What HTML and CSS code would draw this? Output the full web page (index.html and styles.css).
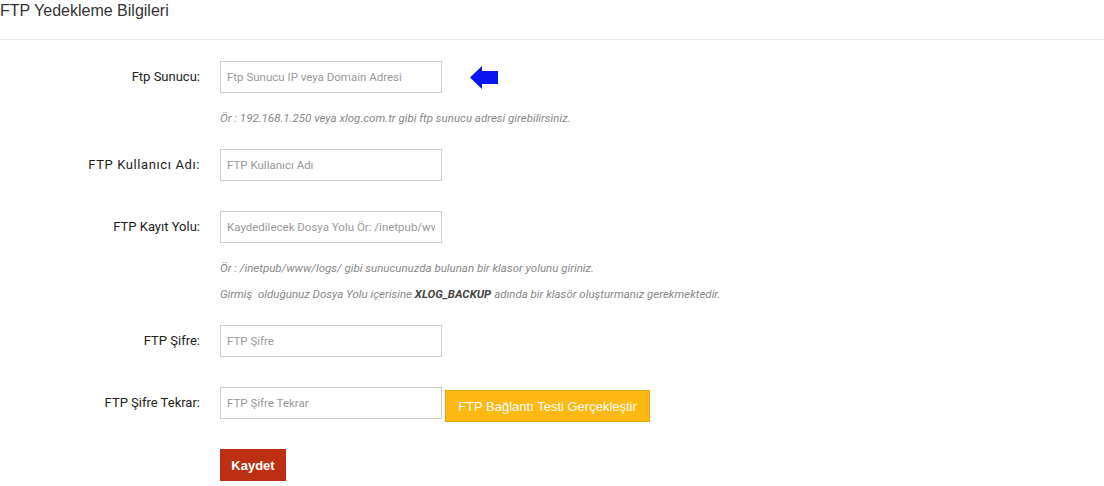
FILE: index.html
```html
<!DOCTYPE html>
<html lang="tr">
<head>
    <meta charset="UTF-8">
    <meta name="viewport" content="width=device-width, initial-scale=1.0">
    <title>FTP Yedekleme Bilgileri</title>
    <link rel="stylesheet" href="styles.css">
</head>
<body>
    <div class="panel">
        <h3 class="panel-title">FTP Yedekleme Bilgileri</h3>

        <form class="ftp-form">
            <div class="group has-help">
                <label for="ftp_sunucu">Ftp Sunucu:</label>
                <div class="field">
                    <div class="field-line">
                        <input type="text" id="ftp_sunucu" placeholder="Ftp Sunucu IP veya Domain Adresi">
                        <svg class="arrow" width="28" height="24" viewBox="0 0 28 24">
                            <path d="M0 11.5 L12 0 L12 5 L28 5 L28 18 L12 18 L12 23 Z" fill="#0a14f0"/>
                        </svg>
                    </div>
                    <div class="help">
                        <p>Ör : 192.168.1.250 veya xlog.com.tr gibi ftp sunucu adresi girebilirsiniz.</p>
                    </div>
                </div>
            </div>

            <div class="group">
                <label for="ftp_kullanici" class="wide">FTP Kullanıcı Adı:</label>
                <div class="field">
                    <input type="text" id="ftp_kullanici" placeholder="FTP Kullanıcı Adı">
                </div>
            </div>

            <div class="group has-help">
                <label for="ftp_yol">FTP Kayıt Yolu:</label>
                <div class="field">
                    <input type="text" id="ftp_yol" placeholder="Kaydedilecek Dosya Yolu Ör: /inetpub/www/logs/">
                    <div class="help">
                        <p>Ör : /inetpub/www/logs/ gibi sunucunuzda bulunan bir klasor yolunu giriniz.</p>
                        <p>Girmiş &nbsp;olduğunuz Dosya Yolu içerisine <b>XLOG_BACKUP</b> adında bir klasör oluşturmanız gerekmektedir.</p>
                    </div>
                </div>
            </div>

            <div class="group">
                <label for="ftp_sifre">FTP Şifre:</label>
                <div class="field">
                    <input type="password" id="ftp_sifre" placeholder="FTP Şifre">
                </div>
            </div>

            <div class="group">
                <label for="ftp_sifre2">FTP Şifre Tekrar:</label>
                <div class="field">
                    <div class="field-line top">
                        <input type="password" id="ftp_sifre2" placeholder="FTP Şifre Tekrar">
                        <button type="button" class="btn btn-test">FTP Bağlantı Testi Gerçekleştir</button>
                    </div>
                </div>
            </div>

            <div class="group">
                <span class="label-space"></span>
                <div class="field">
                    <button type="submit" class="btn btn-save">Kaydet</button>
                </div>
            </div>
        </form>
    </div>
</body>
</html>
```

FILE: styles.css
```css
body {
    font-family: Roboto, "Liberation Sans", Arial, sans-serif;
    margin: 0;
    padding: 0;
    color: #333;
    background: #fff;
}
.panel-title {
    font-family: "Liberation Sans", Arial, sans-serif;
    font-size: 16px;
    font-weight: normal;
    color: #333;
    margin: 0;
    padding: 2px 0 0;
    height: 37px;
    line-height: 18px;
    border-bottom: 1px solid #ebebeb;
}
.ftp-form {
    padding-top: 21px;
}
.group {
    display: flex;
    align-items: flex-start;
    margin-bottom: 30px;
}
.group.has-help {
    margin-bottom: 18px;
}
.group label,
.label-space {
    width: 200px;
    flex-shrink: 0;
    text-align: right;
    font-size: 13px;
    line-height: 32px;
    color: #222;
}
.group label.wide {
    letter-spacing: 0.6px;
}
.field {
    margin-left: 20px;
}
.field-line {
    display: flex;
    align-items: center;
}
/* button sits a little lower than the input but must not push the next row */
.field-line.top {
    align-items: flex-start;
    height: 32px;
}
input[type="text"],
input[type="password"] {
    width: 222px;
    height: 32px;
    padding: 0 6px;
    border: 1px solid #ccc;
    border-radius: 0;
    box-sizing: border-box;
    font-family: Roboto, sans-serif;
    font-size: 11.5px;
    color: #555;
    outline: none;
}
input::placeholder {
    color: #999;
}
.arrow {
    margin-left: 28px;
    margin-top: 1px;
}
.help {
    padding-top: 12px;
}
.help p {
    margin: 0;
    font-size: 11.5px;
    font-style: italic;
    line-height: 26px;
    color: #888;
}
.help b {
    color: #444;
}
.btn {
    border: 1px solid transparent;
    color: #fff;
    cursor: pointer;
    font-family: "Liberation Sans", Arial, sans-serif;
    height: 32px;
}
.btn-test {
    background-color: #fdb813;
    border-color: #e3a30a;
    font-size: 13px;
    padding: 0 10px;
    width: 205px;
    margin-left: 3px;
    margin-top: 3px;
    flex-shrink: 0;
}
.btn-save {
    background-color: #bd2f13;
    border-color: #bd2f13;
    font-size: 13px;
    font-weight: bold;
    width: 66px;
}
```
